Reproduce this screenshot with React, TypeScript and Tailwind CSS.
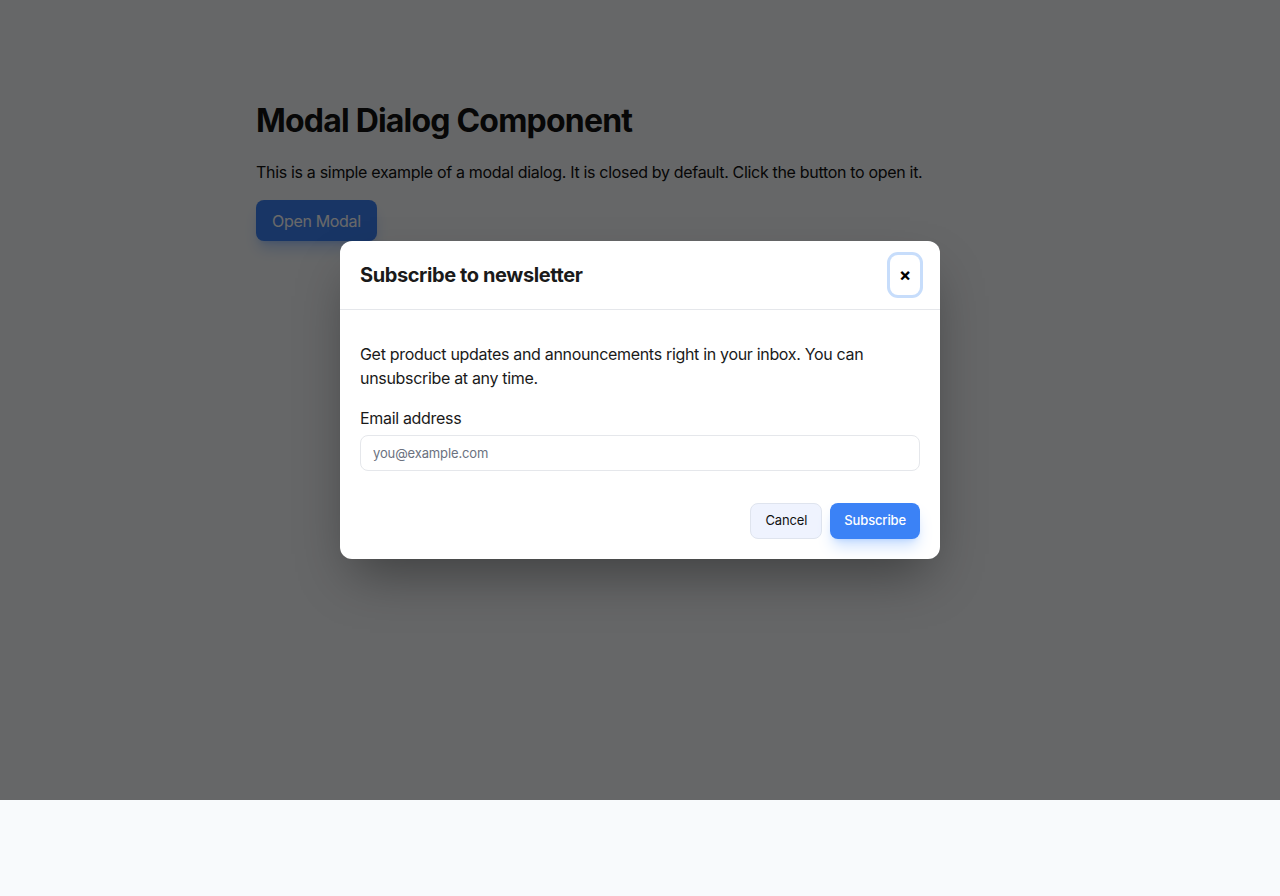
import React from 'react';

const font = { fontFamily: 'Inter, "Noto Sans", sans-serif' };

export default function App() {
  return (
    <div className="relative min-h-[896px] bg-[#f8fafc] text-[#111827] tracking-[-0.02em]" style={font}>
      {/* Page content */}
      <main className="mx-auto max-w-3xl pt-[101px]">
        <h1 className="text-[32px] font-bold leading-[40px] tracking-[-0.025em] text-[#111111]">Modal Dialog Component</h1>
        <p className="mt-[19px] text-base leading-6 text-[#111111]">
          This is a simple example of a modal dialog. It is closed by default. Click the button to open it.
        </p>
        <button className="mt-4 h-[41px] rounded-lg bg-[#3b82f6] px-4 text-base text-white shadow-lg shadow-blue-500/30">
          Open Modal
        </button>
      </main>

      {/* Backdrop */}
      <div className="absolute inset-x-0 top-0 flex h-[800px] items-center justify-center bg-[rgba(0,0,0,0.59)]">
        <div className="w-[600px] overflow-hidden rounded-xl bg-white shadow-2xl shadow-black/40">
          {/* Header */}
          <div className="flex h-[69px] items-center justify-between border-b border-[#e5e7eb] px-5">
            <h2 className="text-[20px] font-bold tracking-[-0.02em] text-[#1a1a1a]">Subscribe to newsletter</h2>
            <button className="flex h-10 w-[30px] items-center justify-center rounded-lg bg-white text-[18px] font-bold leading-none text-black ring-[3px] ring-[#c7ddfb]">
              ×
            </button>
          </div>

          {/* Body */}
          <div className="px-5 pt-8">
            <p className="text-base leading-6 text-[#1a1a1a]">
              Get product updates and announcements right in your inbox. You can unsubscribe at any time.
            </p>
            <label className="mt-4 block text-base leading-6 text-[#1a1a1a]">Email address</label>
            <input
              type="email"
              placeholder="you@example.com"
              className="mt-[5px] block h-9 w-full rounded-lg border border-[#e5e7eb] px-3 text-[13px] tracking-[-0.01em] placeholder:text-[#6b7280] outline-none"
            />
          </div>

          {/* Footer */}
          <div className="flex justify-end gap-2 px-5 pb-5 pt-8">
            <button className="h-9 rounded-lg border border-[#dfe4ee] bg-[#eff3fe] px-3.5 text-[13px] tracking-[-0.01em] text-[#111]">
              Cancel
            </button>
            <button className="h-9 rounded-lg bg-[#3b82f6] px-3.5 text-[13px] font-medium tracking-[-0.01em] text-white shadow-lg shadow-blue-500/25">
              Subscribe
            </button>
          </div>
        </div>
      </div>
    </div>
  );
}
